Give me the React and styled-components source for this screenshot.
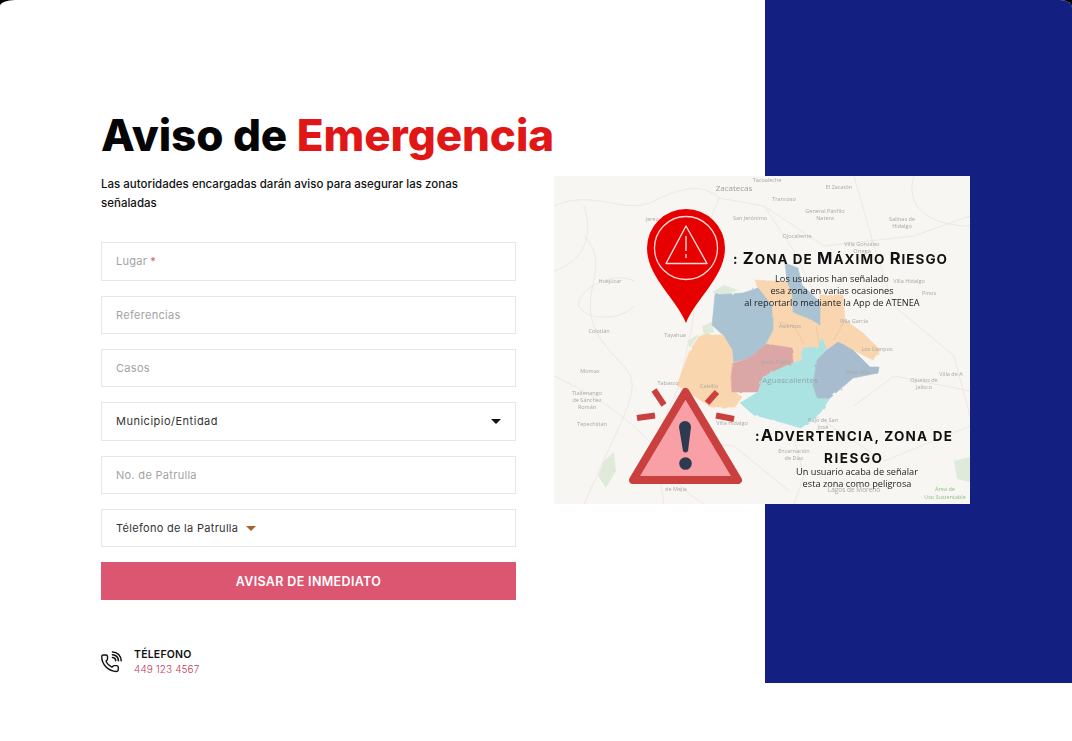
import React from 'react';
import styled, { createGlobalStyle } from 'styled-components';

const GlobalStyle = createGlobalStyle`
    html, body {
        margin: 0;
        padding: 0;
        background: #000;
    }
    * {
        box-sizing: border-box;
    }
`;

const FONT = `Inter, "Open Sans", "Liberation Sans", sans-serif`;

// page
const Page = styled.div`
    position: relative;
    display: grid;
    grid-template-columns: 765px 307px;
    width: 1072px;
    height: 741px;
    background: #fff;
    border-radius: 15px 12px 0 0 / 6px 8px 0 0;
    overflow: hidden;
    font-family: ${FONT};
`;

const FormColumn = styled.div`
    padding: 109px 0 0 101px;
`;

const NavyPanel = styled.div`
    height: 683px;
    background: #141f82;
`;

const Title = styled.h1`
    margin: 0;
    font-size: 44px;
    line-height: 52px;
    font-weight: 800;
    letter-spacing: -0.1px;
    color: #050505;
`;

const Red = styled.span`
    color: #e11717;
`;

const Subtitle = styled.p`
    width: 380px;
    margin: 14px 0 29.3px;
    font-size: 11.5px;
    line-height: 19px;
    font-weight: 500;
    letter-spacing: 0.01px;
    color: #111;
`;

const Form = styled.div`
    display: flex;
    flex-direction: column;
    gap: 15px;
    width: 415px;
`;

const Field = styled.div`
    display: flex;
    align-items: center;
    justify-content: ${(p) => (p.$spread ? 'space-between' : 'flex-start')};
    height: 38.33px;
    padding: 0 14px;
    border: 1px solid #e6e6e6;
    font-size: 11px;
    font-weight: 400;
    letter-spacing: ${(p) => (p.$spread ? '0.5px' : '0.3px')};
    color: ${(p) => (p.$filled ? '#333' : '#a3a3a3')};
    background: #fff;
`;

const Star = styled.span`
    margin-left: 3px;
    color: #e0566f;
`;

const Caret = styled.span`
    width: 0;
    height: 0;
    margin-left: ${(p) => (p.$inline ? '8px' : '0')};
    border-left: 5px solid transparent;
    border-right: 5px solid transparent;
    border-top: 5px solid ${(p) => p.$color};
`;

const Button = styled.button`
    height: 38px;
    border: none;
    background: #dd5671;
    color: #fff;
    font-family: inherit;
    font-size: 12.5px;
    font-weight: 600;
    letter-spacing: 0.35px;
`;

const Contact = styled.div`
    display: flex;
    align-items: center;
    gap: 11px;
    margin-top: 47.5px;
`;

const ContactText = styled.div`
    display: flex;
    flex-direction: column;
    gap: 2px;
`;

const ContactLabel = styled.div`
    font-size: 10.5px;
    line-height: 13px;
    font-weight: 600;
    letter-spacing: 0.2px;
    color: #111;
`;

const ContactValue = styled.div`
    font-size: 10px;
    line-height: 13px;
    font-weight: 300;
    letter-spacing: 0.1px;
    color: #c03c5c;
`;

// map image lying across both columns
const MapImage = styled.svg`
    position: absolute;
    left: 554px;
    top: 176px;
    width: 416px;
    height: 328px;
    font-family: "Open Sans", "Noto Sans", sans-serif;
    filter: blur(0.35px);
`;

const mapLabels = [
    ['Zacatecas', 180, 15, 8, '#a59c94'],
    ['Tacoaleche', 213, 6, 5.5],
    ['El Zacatón', 285, 13, 5.5],
    ['Trancoso', 230, 25, 5.5],
    ['General Pánfilo', 271, 37, 5.5],
    ['Natera', 271, 44, 5.5],
    ['San Jerónimo', 196, 44, 5.5],
    ['Jerez', 98, 45, 5.5],
    ['Salinas de', 348, 45, 5.5],
    ['Hidalgo', 348, 52, 5.5],
    ['Ojocaliente', 243, 62, 5.5],
    ['Villa González', 308, 70, 5.5],
    ['Ortega', 308, 77, 5.5],
    ['Huejúcar', 56, 107, 5.5],
    ['Villa Hidalgo', 355, 107, 5.5],
    ['Pinos', 375, 119, 5.5],
    ['Colotlán', 45, 157, 5.5],
    ['Tayahua', 121, 161, 5.5],
    ['Villa García', 300, 147, 5.5],
    ['Los Campos', 323, 175, 5.5],
    ['Momax', 36, 197, 5.5],
    ['Tabasco', 114, 209, 5.5],
    ['Villa de A', 397, 200, 5.5],
    ['Ojuelos de', 370, 206, 5.5],
    ['Jalisco', 370, 213, 5.5],
    ['Tlaltenango', 33, 219, 5.5],
    ['de Sánchez', 33, 226, 5.5],
    ['Román', 33, 233, 5.5],
    ['Tepechitlán', 38, 250, 5.5],
    ['Villa Hidalgo', 178, 249, 5.5],
    ['Bajo de San', 269, 246, 5.5],
    ['José', 269, 253, 5.5],
    ['Encarnación', 240, 277, 5.5],
    ['de Díaz', 240, 284, 5.5],
    ['Lagos de Moreno', 300, 316, 6.5],
    ['de Mejía', 122, 315, 5.5],
    ['Aguascalientes', 236, 207, 8, '#8fa8a8'],
    ['Asientos', 236, 152, 5.5],
    ['Jesús María', 222, 188, 5.5],
    ['Calvillo', 155, 212, 5.5],
    ['Paso Alto', 304, 198, 5.5],
    ['Área de', 391, 315, 5.5, '#8cc48c'],
    ['Uso Sustentable', 391, 323, 5.5, '#8cc48c'],
];

const roads = [
    'M0 30 C40 12 70 40 100 25 S150 8 165 22 L210 30 L270 70 L360 60 L416 40',
    'M165 22 L150 60 L138 150 L125 210 L100 265 L110 328',
    'M210 30 L240 75 L262 120',
    'M30 60 C60 90 20 120 45 160 S90 190 70 240 L30 328',
    'M0 200 C30 215 60 230 90 260 S105 300 150 328',
    'M300 0 L320 70 L340 130 L400 180 L416 240',
    'M240 262 L250 300 L240 328',
    'M262 240 L330 285 L416 250',
    'M300 230 L340 200 L416 215',
    'M360 0 C350 30 375 50 416 50',
    'M80 105 C60 95 30 110 25 125 S60 150 80 130',
    'M0 95 C30 85 40 60 30 30',
    'M130 265 L180 270 L235 315',
];

const regions = [
    ['#f9d6b0', 'M201 104 L236 106 L239 136 L258 144 L266 149 L266 119 L289 119 L291 144 L309 157 L326 174 L319 184 L299 174 L284 166 L273 174 L268 162 L263 171 L249 172 L248 184 L239 187 L238 172 L219 169 L211 169 L219 154 L219 131 L204 112 Z'],
    ['#a9c3d3', 'M231 87 L244 92 L248 109 L266 126 L266 149 L258 144 L239 136 L238 117 L233 105 Z'],
    ['#a9c3d3', 'M161 119 L189 117 L204 112 L219 131 L219 154 L211 169 L196 182 L179 186 L178 174 L169 159 L158 149 Z'],
    ['#f9d6ae', 'M146 159 L169 159 L178 174 L179 186 L177 201 L178 214 L188 221 L181 231 L157 231 L123 209 L126 201 L136 174 Z'],
    ['#dba6a6', 'M179 187 L196 182 L211 169 L219 169 L238 172 L239 187 L223 194 L209 201 L204 216 L178 216 L177 201 Z'],
    ['#abe2e2', 'M249 172 L263 171 L268 162 L273 174 L263 184 L259 209 L263 222 L276 222 L266 237 L247 252 L230 247 L200 239 L186 227 L204 216 L209 201 L223 194 L239 187 L248 184 Z'],
    ['#a7bdcf', 'M284 166 L299 174 L316 191 L325 191 L324 197 L299 202 L276 222 L263 222 L259 209 L263 184 L273 174 Z'],
];

const WarningMap = () => (
    <MapImage viewBox="0 0 416 328">
        <defs>
            <filter id="rough" x="-5%" y="-5%" width="110%" height="110%">
                <feTurbulence type="fractalNoise" baseFrequency="0.12" numOctaves="2" seed="4" />
                <feDisplacementMap in="SourceGraphic" scale="2.5" />
            </filter>
        </defs>
        <rect width="416" height="328" fill="#f8f6f3" />
        <g fill="none" stroke="#ebe3dd" strokeWidth="0.8">
            {roads.map((d) => <path key={d} d={d} />)}
        </g>
        <g fill="#dfeadb">
            <path d="M158 116 L170 109 L184 114 L170 120 Z" />
            <path d="M148 150 L158 146 L160 156 L150 159 Z" />
            <path d="M133 165 L145 158 L136 172 Z" />
            <path d="M44 300 L50 285 L60 276 L62 295 L52 312 Z" />
            <path d="M400 285 L416 281 L416 306 L403 303 Z" />
        </g>
        <g filter="url(#rough)">
            {regions.map(([color, d]) => <path key={d} fill={color} stroke={color} strokeWidth="0.6" d={d} />)}
        </g>
        <g fill="none" stroke="#e8bf94" strokeWidth="0.6">
            <path d="M222 130 L238 128 M224 146 L240 150 L250 168 M262 150 L266 170 M291 144 L280 164" />
        </g>
        {mapLabels.map(([text, x, y, size, color]) => (
            <text key={text + x} x={x} y={y} fontSize={size} textAnchor="middle" fill={color || '#aaa7a2'}>{text}</text>
        ))}

        {/* pin */}
        <path fill="#e60000" d="M132 147 C122 122 93 101 93 72 A39 39 0 0 1 171 72 C171 101 142 122 132 147 Z" />
        <circle cx="132" cy="72" r="31.5" fill="none" stroke="#ffd9d9" strokeWidth="1.3" />
        <path fill="none" stroke="#ffd9d9" strokeWidth="1.4" strokeLinejoin="round" d="M132 50 L153 87.5 L112 87.5 Z" />
        <path fill="none" stroke="#ffd9d9" strokeWidth="1.4" d="M132 60 L132 75 M132 78 L132 82" />

        {/* warning triangle */}
        <path fill="#f9a0a6" stroke="#c9403f" strokeWidth="8" strokeLinejoin="round" d="M131.5 216 L184 304 L79 304 Z" />
        <path fill="#2d3a4f" d="M125 251 A6 6 0 0 1 137 251 L134 275 Q131.5 278 129 275 Z" />
        <circle cx="131.5" cy="287.5" r="6.3" fill="#2d3a4f" />
        <g stroke="#c9403f" strokeWidth="6">
            <path d="M100 214 L110 229" />
            <path d="M163 216 L153 227" />
            <path d="M83 242 L101 239.5" />
            <path d="M162 239.5 L180 243" />
        </g>

        {/* leyendas */}
        <g fontFamily='Inter, "Liberation Sans", sans-serif' fontWeight="700" fontSize="13.5" fill="#111">
            <text x="179" y="88" textLength="214">
                : <tspan fontSize="16.5">Z</tspan>ONA DE <tspan fontSize="16.5">M</tspan>ÁXIMO <tspan fontSize="16.5">R</tspan>IESGO
            </text>
            <text x="201" y="265" textLength="197">
                :<tspan fontSize="16.5">A</tspan>DVERTENCIA, ZONA DE
            </text>
            <text x="270" y="287" textLength="58">RIESGO</text>
        </g>
        <g fontSize="9.2" fill="#222" textAnchor="middle">
            <text x="278" y="106">Los usuarios han señalado</text>
            <text x="278" y="118">esa zona en varias ocasiones</text>
            <text x="278" y="130">al reportarlo mediante la App de ATENEA</text>
            <text x="303" y="299">Un usuario acaba de señalar</text>
            <text x="303" y="311">esta zona como peligrosa</text>
        </g>
    </MapImage>
);

const PhoneIcon = () => (
    <svg width="22" height="22" viewBox="0 0 24 24" fill="none" stroke="#111" strokeWidth="1.7" strokeLinecap="round" strokeLinejoin="round">
        <path transform="translate(-1 2.5) scale(0.9)" d="M13.832 16.568a1 1 0 0 0 1.213-.303l.355-.465A2 2 0 0 1 17 15h3a2 2 0 0 1 2 2v3a2 2 0 0 1-2 2A18 18 0 0 1 2 4a2 2 0 0 1 2-2h3a2 2 0 0 1 2 2v3a2 2 0 0 1-.8 1.6l-.468.351a1 1 0 0 0-.292 1.233 14 14 0 0 0 6.392 6.384" />
        <path d="M12.5 1a9.5 9.5 0 0 1 9.5 9.5" />
        <path d="M12.5 4a6.5 6.5 0 0 1 6.5 6.5" />
        <path d="M12.5 7a3.5 3.5 0 0 1 3.5 3.5" />
    </svg>
);

const App = () => (
    <>
        <GlobalStyle />
        <Page>
            <FormColumn>
                <Title>Aviso de <Red>Emergencia</Red></Title>
                <Subtitle>Las autoridades encargadas darán aviso para asegurar las zonas señaladas</Subtitle>
                <Form>
                    <Field>Lugar<Star>*</Star></Field>
                    <Field>Referencias</Field>
                    <Field>Casos</Field>
                    <Field $filled $spread>Municipio/Entidad<Caret $color="#111" /></Field>
                    <Field>No. de Patrulla</Field>
                    <Field $filled>Télefono de la Patrulla<Caret $inline $color="#a8622a" /></Field>
                    <Button>AVISAR DE INMEDIATO</Button>
                </Form>
                <Contact>
                    <PhoneIcon />
                    <ContactText>
                        <ContactLabel>TÉLEFONO</ContactLabel>
                        <ContactValue>449 123 4567</ContactValue>
                    </ContactText>
                </Contact>
            </FormColumn>
            <NavyPanel />
            <WarningMap />
        </Page>
    </>
);

export default App;
